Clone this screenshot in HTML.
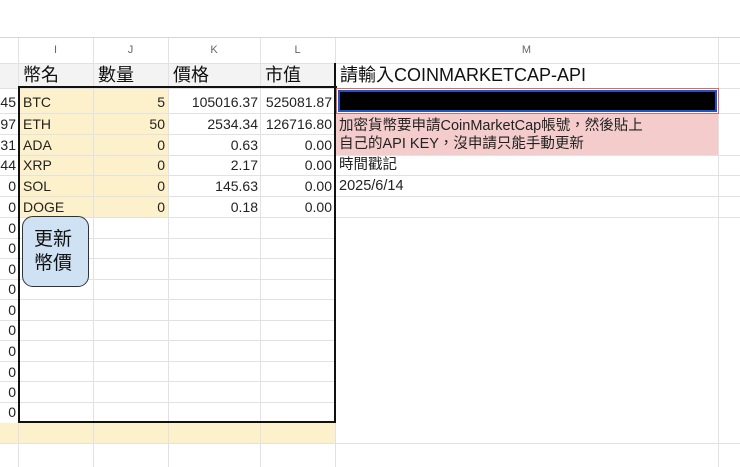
<!DOCTYPE html><html><head><meta charset="utf-8"><style>
body{margin:0;width:740px;height:467px;overflow:hidden;background:#fff;font-family:"Liberation Sans","Noto Sans CJK TC",sans-serif;position:relative}
div{position:absolute;box-sizing:border-box}
.v{width:1px;background:#e2e2e2;top:38px;height:429px}
.h{height:1px;background:#e2e2e2;left:0;width:740px}
.c{font-size:14px;color:#222;line-height:20px;white-space:nowrap}
.r{text-align:right}
.ch{top:38px;height:25px;line-height:25px;font-size:11px;color:#666;text-align:center}
.hd{top:63px;height:25px;line-height:25px;font-size:17px;color:#111;padding-left:3px}
</style></head><body>
<div style="left:0;top:0;width:740px;height:38px;background:#fff;border-bottom:1px solid #d6d6d6"></div>
<div style="left:0;top:63px;width:335px;height:25px;background:#f3f3f3"></div>
<div style="left:18px;top:88px;width:150px;height:129px;background:#fdf1cc"></div>
<div style="left:0;top:423px;width:335px;height:21px;background:#fdf1cc"></div>
<div style="left:335px;top:113px;width:383px;height:42px;background:#f4cccc"></div>
<div class="v" style="left:18px"></div><div class="v" style="left:93px"></div><div class="v" style="left:168px"></div><div class="v" style="left:260px"></div><div class="v" style="left:335px"></div><div class="v" style="left:718px"></div>
<div class="h" style="top:63px"></div><div class="h" style="top:88px"></div><div class="h" style="top:113px"></div><div class="h" style="top:134px;width:335px"></div><div class="h" style="top:155px"></div><div class="h" style="top:175px"></div><div class="h" style="top:196px"></div><div class="h" style="top:217px"></div>
<div class="h" style="top:238px;width:335px"></div><div class="h" style="top:258px;width:335px"></div><div class="h" style="top:279px;width:335px"></div><div class="h" style="top:299px;width:335px"></div><div class="h" style="top:320px;width:335px"></div><div class="h" style="top:340px;width:335px"></div><div class="h" style="top:361px;width:335px"></div><div class="h" style="top:381px;width:335px"></div><div class="h" style="top:402px;width:335px"></div><div class="h" style="top:443px"></div>
<div style="left:18px;top:86px;width:319px;height:2px;background:#111"></div>
<div style="left:18px;top:86px;width:2px;height:337px;background:#111"></div>
<div style="left:334px;top:63px;width:2px;height:360px;background:#111"></div>
<div style="left:18px;top:421px;width:318px;height:2px;background:#111"></div>
<div class="ch" style="left:18px;width:75px">I</div><div class="ch" style="left:93px;width:75px">J</div><div class="ch" style="left:168px;width:92px">K</div><div class="ch" style="left:260px;width:75px">L</div><div class="ch" style="left:335px;width:383px">M</div>
<div class="hd" style="left:20px;font-size:18px">幣名</div><div class="hd" style="left:95px;font-size:18px">數量</div><div class="hd" style="left:170px;font-size:18px">價格</div><div class="hd" style="left:262px;font-size:18px">市值</div>
<div class="hd" style="left:337px;font-size:18px">請輸入COINMARKETCAP-API</div>
<div class="c" style="left:23px;top:92px">BTC</div><div class="c r" style="left:93px;width:72px;top:92px">5</div><div class="c r" style="left:168px;width:90px;top:92px">105016.37</div><div class="c r" style="left:260px;width:72px;top:92px">525081.87</div>
<div class="c" style="left:23px;top:114px">ETH</div><div class="c r" style="left:93px;width:72px;top:114px">50</div><div class="c r" style="left:168px;width:90px;top:114px">2534.34</div><div class="c r" style="left:260px;width:72px;top:114px">126716.80</div>
<div class="c" style="left:23px;top:135px">ADA</div><div class="c r" style="left:93px;width:72px;top:135px">0</div><div class="c r" style="left:168px;width:90px;top:135px">0.63</div><div class="c r" style="left:260px;width:72px;top:135px">0.00</div>
<div class="c" style="left:23px;top:155px">XRP</div><div class="c r" style="left:93px;width:72px;top:155px">0</div><div class="c r" style="left:168px;width:90px;top:155px">2.17</div><div class="c r" style="left:260px;width:72px;top:155px">0.00</div>
<div class="c" style="left:23px;top:176px">SOL</div><div class="c r" style="left:93px;width:72px;top:176px">0</div><div class="c r" style="left:168px;width:90px;top:176px">145.63</div><div class="c r" style="left:260px;width:72px;top:176px">0.00</div>
<div class="c" style="left:23px;top:197px">DOGE</div><div class="c r" style="left:93px;width:72px;top:197px">0</div><div class="c r" style="left:168px;width:90px;top:197px">0.18</div><div class="c r" style="left:260px;width:72px;top:197px">0.00</div>
<div class="c r" style="left:0;width:16px;top:92px">45</div><div class="c r" style="left:0;width:16px;top:114px">97</div><div class="c r" style="left:0;width:16px;top:135px">31</div><div class="c r" style="left:0;width:16px;top:155px">44</div><div class="c r" style="left:0;width:16px;top:176px">0</div><div class="c r" style="left:0;width:16px;top:197px">0</div>
<div class="c r" style="left:0;width:16px;top:218px">0</div><div class="c r" style="left:0;width:16px;top:238px">0</div><div class="c r" style="left:0;width:16px;top:259px">0</div><div class="c r" style="left:0;width:16px;top:279px">0</div><div class="c r" style="left:0;width:16px;top:300px">0</div><div class="c r" style="left:0;width:16px;top:320px">0</div><div class="c r" style="left:0;width:16px;top:341px">0</div><div class="c r" style="left:0;width:16px;top:362px">0</div><div class="c r" style="left:0;width:16px;top:382px">0</div><div class="c r" style="left:0;width:16px;top:402px">0</div>
<div style="left:336px;top:88px;width:383px;height:26px;border:1px solid #e06666;padding:1px"><div style="position:relative;width:100%;height:100%;background:#000;border:2px solid #1a56c8"></div></div>
<div class="c" style="left:339px;top:116px;font-size:14.5px">加密貨幣要申請CoinMarketCap帳號，然後貼上</div>
<div class="c" style="left:339px;top:134px;font-size:14.5px">自己的API KEY，沒申請只能手動更新</div>
<div class="c" style="left:339px;top:155px;font-size:14.5px">時間戳記</div>
<div class="c" style="left:339px;top:176px;font-size:14.5px">2025/6/14</div>
<div style="left:22px;top:216px;width:67px;height:71px;background:#cfe2f3;border:1px solid #333;border-radius:11px;font-size:19px;line-height:24px;padding:11px 0 0 11px;color:#111">更新<br>幣價</div>
</body></html>
